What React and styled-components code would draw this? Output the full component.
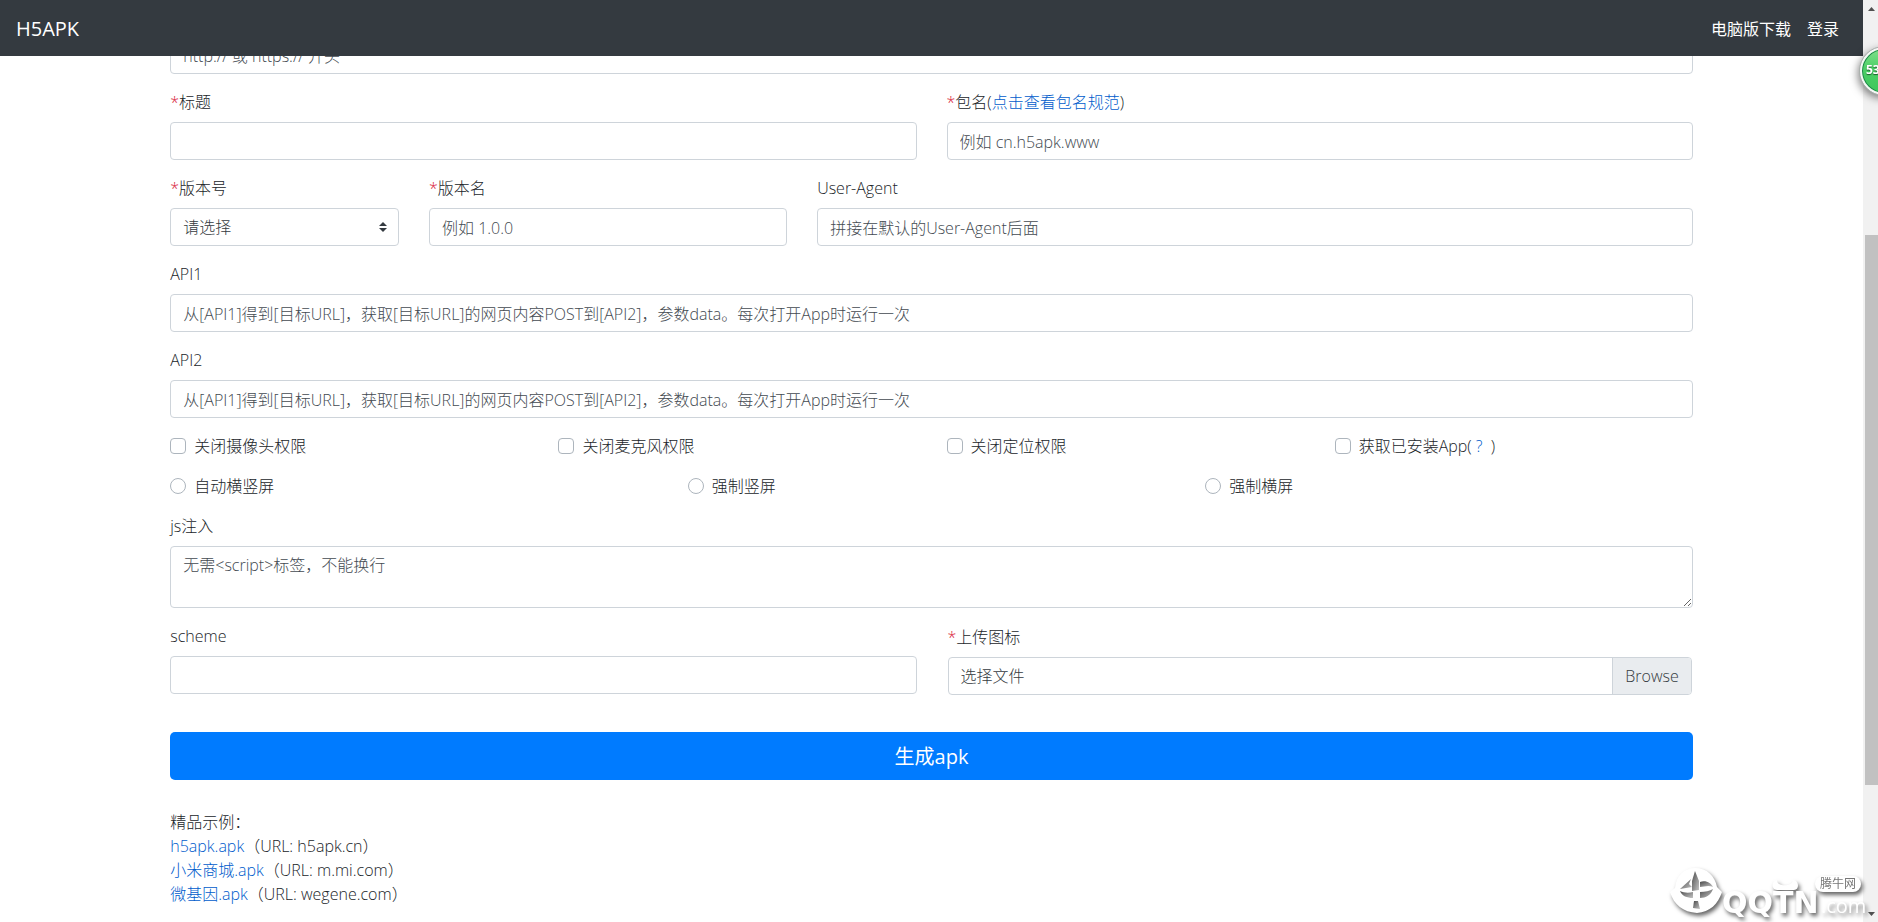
import { useState } from 'react';
import styled, { createGlobalStyle, css } from 'styled-components';

const GlobalStyle = createGlobalStyle`
  *,
  *::before,
  *::after {
    box-sizing: border-box;
  }

  body {
    margin: 0;
    overflow: hidden;
    background-color: #fff;
    color: #212529;
    font-family: 'Open Sans', 'Noto Sans CJK SC', sans-serif;
    font-size: 16px;
    font-weight: 300;
    line-height: 24px;
  }

  input,
  select,
  textarea,
  button {
    margin: 0;
    font-family: inherit;
    font-size: inherit;
    font-weight: inherit;
    line-height: inherit;
  }

  a {
    color: #005ccc;
    text-decoration: none;
  }
`;

const Page = styled.div`
  display: grid;
  grid-template-columns: 1fr 15px;
  height: 100vh;
  overflow: hidden;
`;

const Content = styled.div`
  min-width: 0;
  overflow: hidden;
`;

const Navbar = styled.nav`
  position: sticky;
  top: 0;
  z-index: 10;
  display: flex;
  align-items: center;
  justify-content: space-between;
  height: 56px;
  padding: 2px 24px 0 16px;
  background-color: #343a40;
  font-weight: 400;
`;

const Brand = styled.a`
  color: #fff;
  font-size: 20px;
  line-height: 30px;
`;

const NavLinks = styled.div`
  display: flex;
  gap: 16px;

  a {
    color: #fff;
  }
`;

const Main = styled.main`
  width: calc(100% * 10 / 12);
  margin: -20px auto 0;
  padding: 0 15px;
`;

const Row = styled.div`
  display: grid;
  grid-template-columns: repeat(12, 1fr);
  margin: 0 -15px;
`;

const Field = styled.div`
  grid-column: span ${({ $span }) => $span || 12};
  min-width: 0;
  margin-bottom: 16px;
  padding: 0 15px;
`;

const Label = styled.label`
  display: block;
  margin-bottom: 8px;
`;

const Star = styled.span`
  color: #d9263e;
`;

const control = css`
  display: block;
  width: 100%;
  height: 38px;
  padding: 6px 12px;
  border: 1px solid #ced4da;
  border-radius: 4px;
  outline: none;
  background-color: #fff;
  color: #343a40;

  &::placeholder {
    color: #434a51;
    opacity: 1;
  }

  &:focus {
    border-color: #80bdff;
  }
`;

const Input = styled.input`
  ${control}
  padding: 7px 12px 5px;
`;

const TextArea = styled.textarea`
  ${control}
  height: 62px;
  resize: vertical;
`;

const SelectWrap = styled.div`
  position: relative;

  svg {
    position: absolute;
    top: 14px;
    right: 12px;
    pointer-events: none;
  }
`;

const Select = styled.select`
  ${control}
  appearance: none;
`;

const Choice = styled.label`
  display: flex;
  align-items: center;
  gap: 8px;
`;

const ChoiceBox = styled.input`
  appearance: none;
  flex: none;
  width: 16px;
  height: 16px;
  border: 1px solid #adb5bd;
  border-radius: ${({ type }) => (type === 'radio' ? '50%' : '4px')};
  background-color: #fff;

  &:checked {
    border-color: #007bff;
    background-color: #007bff;
  }
`;

const UploadField = styled(Field)`
  margin-bottom: 15px;
  padding: 1px 16px 0;
`;

const FileBox = styled.label`
  display: flex;
  justify-content: space-between;
  height: 38px;
  overflow: hidden;
  border: 1px solid #ced4da;
  border-radius: 4px;
  color: #343a40;

  span {
    padding: 6px 12px;
  }

  span:last-child {
    border-left: 1px solid #ced4da;
    background-color: #e9ecef;
  }
`;

const HiddenFile = styled.input`
  position: absolute;
  width: 1px;
  height: 1px;
  opacity: 0;
`;

const SubmitButton = styled.button`
  display: block;
  width: 100%;
  height: 48px;
  margin-top: 22px;
  padding: 2px 0 0;
  border: 0;
  border-radius: 5px;
  background-color: #007bff;
  color: #fff;
  font-size: 20px;
  font-weight: 400;
  line-height: 30px;
  cursor: pointer;
`;

const Examples = styled.section`
  margin-top: 30px;
`;

const Scrollbar = styled.div`
  display: flex;
  flex-direction: column;
  padding: 7px 0 6px 2px;
  background-color: #f1f1f1;

  svg {
    flex: none;
    margin-left: 3px;
  }
`;

const Track = styled.div`
  flex: 1;
  display: grid;
  grid-template-rows: 224fr 550fr 127fr;
`;

const Thumb = styled.div`
  grid-row: 2;
  background-color: #c1c1c1;
`;

const Bubble = styled.div`
  position: fixed;
  top: 47px;
  right: -30px;
  z-index: 20;
  width: 48px;
  height: 48px;
  padding: 9px 4px;
  border: 2px solid #f4f7f5;
  border-radius: 50%;
  outline: 1px solid #a9b0ac;
  background: linear-gradient(#7fe08a, #4ccf66 45%, #3fc65c);
  box-shadow: inset 0 0 0 1px #1e8449, -2px 3px 8px rgba(0, 0, 0, 0.5);
  color: #fff;
  font-size: 12px;
  font-weight: 700;
  text-shadow: 0 1px 1px #1c5c2c;
`;

const Watermark = styled.svg`
  position: fixed;
  right: 0;
  bottom: 0;
  z-index: 20;
  filter: drop-shadow(2px 3px 2px rgba(0, 0, 0, 0.6));
`;

const apiHint =
  '从[API1]得到[目标URL]，获取[目标URL]的网页内容POST到[API2]，参数data。每次打开App时运行一次';

const permissions = [
  { id: 'camera', label: '关闭摄像头权限' },
  { id: 'mic', label: '关闭麦克风权限' },
  { id: 'location', label: '关闭定位权限' },
  {
    id: 'apps',
    label: (
      <>
        获取已安装App( <a href='#apps'>?</a> &nbsp;)
      </>
    ),
  },
];

const orientations = [
  { id: 'auto', label: '自动横竖屏' },
  { id: 'portrait', label: '强制竖屏' },
  { id: 'landscape', label: '强制横屏' },
];

const examples = [
  { name: 'h5apk.apk', url: 'h5apk.cn' },
  { name: '小米商城.apk', url: 'm.mi.com' },
  { name: '微基因.apk', url: 'wegene.com' },
];

function SiteLogo() {
  return (
    <Watermark width='210' height='56' viewBox='0 0 210 56' fill='#fff'>
      <defs>
        <linearGradient id='shade' x1='0' y1='0' x2='1' y2='1'>
          <stop offset='0' stopColor='#4a4a4a' />
          <stop offset='1' stopColor='#c4c4c4' />
        </linearGradient>
      </defs>
      <path d='M27 2C39 2 47 10 49 21L54 26C50 38 42 46 29 47C15 46 6 39 2 26L7 22C8 10 16 2 27 2Z' />
      <g fill='url(#shade)'>
        <path d='M27 5L24 15V25L31 24V15Z' />
        <path d='M23 13L12 23L24 21L21 18Z' />
        <path d='M32 16C38 14 43 17 45 21C40 19 36 21 32 21Z' />
        <path d='M12 25C16 27 21 27 25 26L25 32C19 32 14 30 12 25Z' />
        <path d='M32 26C37 26 42 25 45 23C43 29 38 32 32 32Z' />
        <path d='M26 35H30L32 43L25 42Z' />
      </g>
      <text
        x='54'
        y='47'
        fontFamily='DejaVu Sans'
        fontSize='30'
        fontWeight='700'
      >
        QQTN
      </text>
      <path d='M109 14C108 21 125 21 125 14C131 14 132 24 126 24H109C103 24 103 15 109 14Z' />
      <rect x='147' y='10' width='46' height='16' rx='8' />
      <text x='152' y='22' fontSize='12' fontWeight='400' fill='#777'>
        腾牛网
      </text>
      <text x='153' y='47' fontSize='20' fontWeight='400'>
        .com
      </text>
    </Watermark>
  );
}

export default function App() {
  const [orientation, setOrientation] = useState('');

  return (
    <>
      <GlobalStyle />
      <Page>
        <Content>
          <Navbar>
            <Brand href='#home'>H5APK</Brand>
            <NavLinks>
              <a href='#download'>电脑版下载</a>
              <a href='#login'>登录</a>
            </NavLinks>
          </Navbar>

          <Main>
            <form onSubmit={(e) => e.preventDefault()}>
              <Row>
                <Field>
                  <Input aria-label='URL' placeholder='http:// 或 https:// 开头' />
                </Field>

                <Field $span={6}>
                  <Label htmlFor='title'>
                    <Star>*</Star>标题
                  </Label>
                  <Input id='title' />
                </Field>
                <Field $span={6}>
                  <Label htmlFor='package'>
                    <Star>*</Star>包名(<a href='#rules'>点击查看包名规范</a>)
                  </Label>
                  <Input id='package' placeholder='例如 cn.h5apk.www' />
                </Field>

                <Field $span={2}>
                  <Label htmlFor='code'>
                    <Star>*</Star>版本号
                  </Label>
                  <SelectWrap>
                    <Select id='code'>
                      <option>请选择</option>
                    </Select>
                    <svg width='8' height='10' viewBox='0 0 4 5' fill='#343a40'>
                      <path d='M2 0L0 2h4zm0 5L0 3h4z' />
                    </svg>
                  </SelectWrap>
                </Field>
                <Field $span={3}>
                  <Label htmlFor='version'>
                    <Star>*</Star>版本名
                  </Label>
                  <Input id='version' placeholder='例如 1.0.0' />
                </Field>
                <Field $span={7}>
                  <Label htmlFor='agent'>User-Agent</Label>
                  <Input id='agent' placeholder='拼接在默认的User-Agent后面' />
                </Field>

                <Field>
                  <Label htmlFor='api1'>API1</Label>
                  <Input id='api1' placeholder={apiHint} />
                </Field>
                <Field>
                  <Label htmlFor='api2'>API2</Label>
                  <Input id='api2' placeholder={apiHint} />
                </Field>

                {permissions.map(({ id, label }) => (
                  <Field key={id} $span={3}>
                    <Choice>
                      <ChoiceBox type='checkbox' name={id} />
                      <span>{label}</span>
                    </Choice>
                  </Field>
                ))}

                {orientations.map(({ id, label }) => (
                  <Field key={id} $span={4}>
                    <Choice>
                      <ChoiceBox
                        type='radio'
                        name='orientation'
                        checked={orientation === id}
                        onChange={() => setOrientation(id)}
                      />
                      <span>{label}</span>
                    </Choice>
                  </Field>
                ))}

                <Field>
                  <Label htmlFor='js'>js注入</Label>
                  <TextArea id='js' placeholder='无需<script>标签，不能换行' />
                </Field>

                <Field $span={6}>
                  <Label htmlFor='scheme'>scheme</Label>
                  <Input id='scheme' />
                </Field>
                <UploadField $span={6}>
                  <Label htmlFor='icon'>
                    <Star>*</Star>上传图标
                  </Label>
                  <HiddenFile id='icon' type='file' />
                  <FileBox htmlFor='icon'>
                    <span>选择文件</span>
                    <span>Browse</span>
                  </FileBox>
                </UploadField>
              </Row>
              <SubmitButton type='submit'>生成apk</SubmitButton>
            </form>

            <Examples>
              <div>精品示例：</div>
              {examples.map(({ name, url }) => (
                <div key={name}>
                  <a href={`#${url}`}>{name}</a>（URL: {url}）
                </div>
              ))}
            </Examples>
          </Main>
        </Content>

        <Scrollbar>
          <svg width='7' height='4' viewBox='0 0 7 4' fill='#505050'>
            <path d='M0 4L3.5 0L7 4z' />
          </svg>
          <Track>
            <Thumb />
          </Track>
          <svg width='7' height='4' viewBox='0 0 7 4' fill='#505050'>
            <path d='M0 0L3.5 4L7 0z' />
          </svg>
        </Scrollbar>
      </Page>
      <Bubble>53</Bubble>
      <SiteLogo />
    </>
  );
}
